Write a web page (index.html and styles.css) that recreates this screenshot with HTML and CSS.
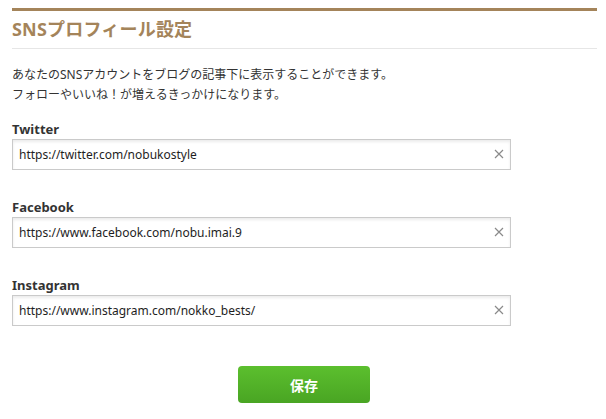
FILE: index.html
```html
<!DOCTYPE html>
<html lang="ja">
<head>
    <meta charset="UTF-8">
    <meta name="viewport" content="width=device-width, initial-scale=1.0">
    <title>SNSプロフィール設定</title>
    <link rel="stylesheet" href="styles.css">
</head>
<body>
    <div class="panel">
        <h1 class="panel-title">SNSプロフィール設定</h1>

        <p class="lead">あなたのSNSアカウントをブログの記事下に表示することができます。<br>フォローやいいね！が増えるきっかけになります。</p>

        <form id="snsForm">
            <div class="form-group">
                <label for="twitter">Twitter</label>
                <div class="input-wrap">
                    <input type="text" id="twitter" name="twitter" value="https://twitter.com/nobukostyle">
                    <button type="button" class="clear" aria-label="クリア">
                        <svg width="10" height="10" viewBox="0 0 10 10"><path d="M1 1L9 9M9 1L1 9" stroke="#8a8a8a" stroke-width="1.2" fill="none"/></svg>
                    </button>
                </div>
            </div>

            <div class="form-group">
                <label for="facebook">Facebook</label>
                <div class="input-wrap">
                    <input type="text" id="facebook" name="facebook" value="https://www.facebook.com/nobu.imai.9">
                    <button type="button" class="clear" aria-label="クリア">
                        <svg width="10" height="10" viewBox="0 0 10 10"><path d="M1 1L9 9M9 1L1 9" stroke="#8a8a8a" stroke-width="1.2" fill="none"/></svg>
                    </button>
                </div>
            </div>

            <div class="form-group">
                <label for="instagram">Instagram</label>
                <div class="input-wrap">
                    <input type="text" id="instagram" name="instagram" value="https://www.instagram.com/nokko_bests/">
                    <button type="button" class="clear" aria-label="クリア">
                        <svg width="10" height="10" viewBox="0 0 10 10"><path d="M1 1L9 9M9 1L1 9" stroke="#8a8a8a" stroke-width="1.2" fill="none"/></svg>
                    </button>
                </div>
            </div>

            <div class="actions">
                <button type="submit" class="save">保存</button>
            </div>
        </form>
    </div>
</body>
</html>
```

FILE: styles.css
```css
body {
    font-family: "Noto Sans", "Noto Sans CJK JP", sans-serif;
    color: #333;
    margin: 0;
    padding: 8px 9px 0 12px;
}
.panel {
    border-top: 3px solid #a4845a;
}
.panel-title {
    margin: 0;
    font-size: 18px;
    line-height: 37px;
    letter-spacing: 0.2px;
    color: #a4845a;
    border-bottom: 1px solid #e6e6e6;
}
.lead {
    margin: 16px 0 15px;
    font-size: 12px;
    line-height: 20px;
}
.form-group {
    margin-bottom: 28px;
}
label {
    display: block;
    font-size: 13px;
    font-weight: bold;
    line-height: 19px;
}
.input-wrap {
    position: relative;
    width: 499px;
}
input {
    width: 100%;
    height: 31px;
    padding: 0 30px 0 6px;
    border: 1px solid #cacaca;
    box-shadow: inset 0 2px 3px rgba(0, 0, 0, 0.08);
    box-sizing: border-box;
    font-family: inherit;
    font-size: 12px;
    color: #1e1e1e;
    outline: none;
}
.clear {
    position: absolute;
    right: 7px;
    top: 10px;
    padding: 0;
    border: none;
    background: none;
    width: 10px;
    height: 10px;
    display: flex;
}
.actions {
    display: flex;
    justify-content: center;
    padding-top: 12px;
    width: 584px;
}
.save {
    width: 132px;
    height: 37px;
    border: none;
    border-radius: 4px;
    background: linear-gradient(#5cbf2e, #49a523);
    color: #fff;
    font-family: inherit;
    font-size: 14px;
    font-weight: bold;
    cursor: pointer;
}
```
